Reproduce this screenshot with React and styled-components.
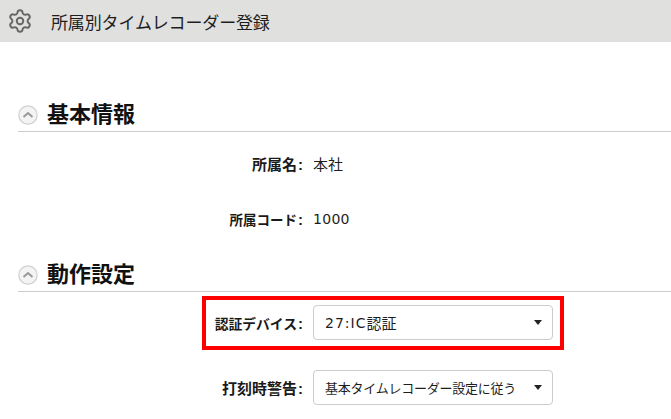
import React from 'react';
import styled, { createGlobalStyle } from 'styled-components';
import { Settings } from 'lucide-react';

const Global = createGlobalStyle`
  html, body { margin: 0; padding: 0; background: #fff; overflow: hidden; }
  body { font-family: "DejaVu Sans", "Noto Sans CJK JP", sans-serif; color: #1a1a1a; }
`;

const Page = styled.div`
  width: 671px;
  height: 419px;
  overflow: hidden;
`;

const Header = styled.header`
  display: flex;
  align-items: center;
  gap: 18px;
  height: 42px;
  padding-left: 7px;
  background: #e0e0de;
`;

const Title = styled.h1`
  margin: 0;
  font-size: 17px;
  font-weight: normal;
  letter-spacing: -0.15px;
  color: #1e1e1e;
`;

const Content = styled.main`
  padding: 57px 0 0 18px;
`;

const SectionHead = styled.div`
  display: flex;
  align-items: center;
  gap: 9px;
  height: 32px;
  margin-top: ${({ $mt }) => $mt || 0}px;
  border-bottom: 1px solid #ccc;
`;

const SectionTitle = styled.h2`
  margin: 0;
  font-size: 22px;
  font-weight: bold;
  line-height: 32px;
  color: #111;
`;

const Row = styled.div`
  display: grid;
  grid-template-columns: 285px 240px;
  column-gap: 10px;
  align-items: center;
  height: ${({ $h }) => $h}px;
  margin-top: ${({ $mt }) => $mt}px;
`;

const Label = styled.label`
  text-align: right;
  font-size: ${({ $size }) => $size || 15}px;
  font-weight: bold;
  color: #1a1a1a;
`;

const Colon = styled.span`
  font-family: "Liberation Sans", sans-serif;
  font-size: 15px;
  margin-left: 1px;
`;

const Value = styled.span`
  font-size: 15px;
  color: #1e1e1e;
`;

const Latin = styled.span`
  font-size: 14px;
  letter-spacing: ${({ $spacing }) => $spacing || 0}px;
`;

const Select = styled.div`
  position: relative;
  display: flex;
  align-items: center;
  box-sizing: border-box;
  height: 35px;
  padding-left: 11px;
  border: 1px solid #ccc;
  border-radius: 4px;
  background: #fff;
  font-size: ${({ $size }) => $size}px;
  letter-spacing: ${({ $spacing }) => $spacing || 0}px;
  color: #1e1e1e;
  white-space: nowrap;
`;

const Caret = styled.span`
  position: absolute;
  right: 10px;
  top: 14px;
  width: 0;
  height: 0;
  border-left: 4.5px solid transparent;
  border-right: 4.5px solid transparent;
  border-top: 5px solid #222;
`;

const Highlight = styled.div`
  position: relative;
`;

const RedBox = styled.div`
  position: absolute;
  left: 184px;
  top: -9px;
  width: 362px;
  height: 54px;
  box-sizing: border-box;
  border: 4px solid #f00;
  pointer-events: none;
`;

const CollapseIcon = () => (
  <svg width="20" height="20" viewBox="0 0 20 20" fill="none">
    <circle cx="10" cy="10" r="9.2" fill="#f4f4f4" stroke="#d0d0d0" strokeWidth="1.2" />
    <path d="M5.5 12 10 8l4.5 4" stroke="#999" strokeWidth="2" />
  </svg>
);

const Section = ({ title, mt }) => (
  <SectionHead $mt={mt}>
    <CollapseIcon />
    <SectionTitle>{title}</SectionTitle>
  </SectionHead>
);

const Dropdown = ({ size, spacing, children }) => (
  <Select $size={size} $spacing={spacing}>
    {children}
    <Caret />
  </Select>
);

export default function App() {
  return (
    <Page>
      <Global />
      <Header>
        <Settings size={26} color="#666" strokeWidth={1.8} />
        <Title>所属別タイムレコーダー登録</Title>
      </Header>
      <Content>
        <Section title="基本情報" />
        <Row $h={20} $mt={21}>
          <Label>所属名<Colon>:</Colon></Label>
          <Value>本社</Value>
        </Row>
        <Row $h={20} $mt={36}>
          <Label $size={13.5}>所属コード<Colon>:</Colon></Label>
          <Value><Latin $spacing={0.3}>1000</Latin></Value>
        </Row>
        <Section title="動作設定" mt={30} />
        <Highlight>
          <Row $h={35} $mt={13}>
            <Label $size={13.8}>認証デバイス<Colon>:</Colon></Label>
            <Dropdown size={15}><Latin $spacing={1}>27:IC</Latin>認証</Dropdown>
          </Row>
          <RedBox />
        </Highlight>
        <Row $h={35} $mt={30}>
          <Label>打刻時警告<Colon>:</Colon></Label>
          <Dropdown size={13} spacing={-0.25}>基本タイムレコーダー設定に従う</Dropdown>
        </Row>
      </Content>
    </Page>
  );
}
